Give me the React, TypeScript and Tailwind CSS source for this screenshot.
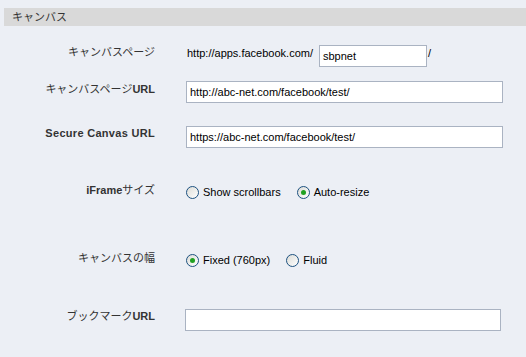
import React from "react";

const font = { fontFamily: '"Liberation Sans", "Noto Sans CJK JP", sans-serif' };

function Radio({ checked, label }: { checked?: boolean; label: string }) {
  return (
    <div className="flex items-center gap-[4px]">
      <div className="w-[13px] h-[13px] rounded-full border border-[#1c5180] bg-gradient-to-br from-[#dcdcd7] to-white flex items-center justify-center">
        {checked && <div className="w-[5px] h-[5px] rounded-full bg-[#21a121]" />}
      </div>
      <span className="text-[11px] leading-[13px] text-black">{label}</span>
    </div>
  );
}

function Label({ children, pt }: { children: React.ReactNode; pt: string }) {
  return (
    <div className={`w-[155px] shrink-0 text-right text-[11px] leading-[13px] text-[#333] ${pt}`}>
      {children}
    </div>
  );
}

function Input({ value, w }: { value: string; w: string }) {
  return (
    <div className={`h-[22px] ${w} border border-[#aab3c2] bg-white flex items-center px-[3px] text-[11px] text-black`}>
      {value}
    </div>
  );
}

export default function App() {
  return (
    <div className="w-[526px] h-[357px] bg-[#eceff5] overflow-hidden" style={font}>
      <div className="pt-[8px] pl-[4px]">
        <div className="h-[18px] bg-[#d9d9d9] flex items-center pl-[8px] text-[11px] text-[#333]">キャンバス</div>
      </div>
      <div className="flex flex-col">
        <div className="flex mt-[19px] h-[22px]">
          <Label pt="pt-[1px]">キャンバスページ</Label>
          <div className="flex items-center ml-[32px] text-[11px] text-black">
            <span className="mt-[-5px]">http://apps.facebook.com/</span>
            <Input value="sbpnet" w="w-[108px] ml-[6px]" />
            <span className="mt-[-5px] ml-[1px]">/</span>
          </div>
        </div>
        <div className="flex mt-[14px] h-[22px]">
          <Label pt="pt-[2px]">
            キャンバスページ<span className="font-bold">URL</span>
          </Label>
          <div className="ml-[31px]">
            <Input value="http://abc-net.com/facebook/test/" w="w-[317px]" />
          </div>
        </div>
        <div className="flex mt-[23px] h-[22px]">
          <Label pt="pt-[1px]">
            <span className="font-bold tracking-[0.3px]">Secure Canvas URL</span>
          </Label>
          <div className="ml-[31px]">
            <Input value="https://abc-net.com/facebook/test/" w="w-[317px]" />
          </div>
        </div>
        <div className="flex mt-[36px] h-[16px] items-center">
          <Label pt="pt-0 -mt-[3px]">
            <span className="font-bold">iFrame</span>サイズ
          </Label>
          <div className="ml-[31px] flex items-center gap-[16px]">
            <Radio label="Show scrollbars" />
            <Radio checked label="Auto-resize" />
          </div>
        </div>
        <div className="flex mt-[52px] h-[16px] items-center">
          <Label pt="pt-0 -mt-[3px]">キャンバスの幅</Label>
          <div className="ml-[31px] flex items-center gap-[16px]">
            <Radio checked label="Fixed (760px)" />
            <Radio label="Fluid" />
          </div>
        </div>
        <div className="flex mt-[41px] h-[22px]">
          <Label pt="pt-[1px]">
            ブックマーク<span className="font-bold">URL</span>
          </Label>
          <div className="ml-[30px]">
            <Input value="" w="w-[316px]" />
          </div>
        </div>
      </div>
    </div>
  );
}
